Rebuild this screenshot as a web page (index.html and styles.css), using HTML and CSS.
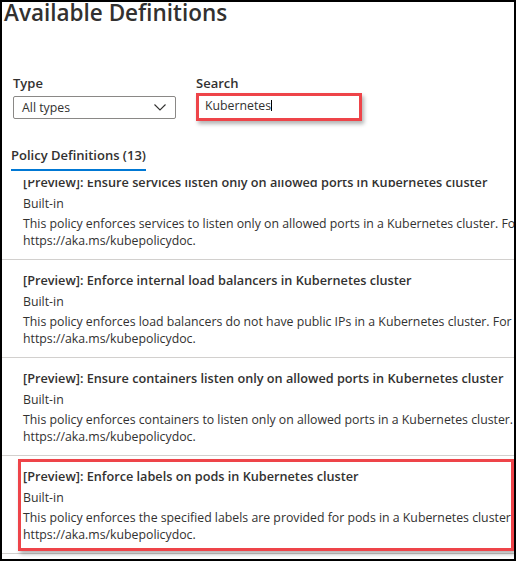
FILE: index.html
```html
<!DOCTYPE html>
<html lang="en">
<head>
<meta charset="utf-8">
<title>Available Definitions</title>
<link rel="stylesheet" href="styles.css">
</head>
<body>
<div class="frame">
  <h1 class="title">Available Definitions</h1>
  <div class="filters">
    <div class="field field-type">
      <div class="label">Type</div>
      <div class="select">
        <span class="select-text">All types</span>
        <svg class="chevron" width="12" height="7" viewBox="0 0 12 7"><polyline points="0.5,0.5 6,6 11.5,0.5" fill="none" stroke="#323130" stroke-width="1.1"/></svg>
      </div>
    </div>
    <div class="field field-search">
      <div class="label">Search</div>
      <div class="search"><span class="search-text">Kubernetes</span><span class="caret"></span></div>
    </div>
  </div>
  <div class="tabs"><div class="tab active">Policy Definitions (13)</div></div>
  <div class="list">
    <div class="list-inner">
      <div class="item">
        <div class="item-title">[Preview]: Ensure services listen only on allowed ports in Kubernetes cluster</div>
        <div class="item-type">Built-in</div>
        <div class="item-desc">This policy enforces services to listen only on allowed ports in a Kubernetes cluster. For more information, see</div>
        <div class="item-desc">https://aka.ms/kubepolicydoc.</div>
      </div>
      <div class="item">
        <div class="item-title">[Preview]: Enforce internal load balancers in Kubernetes cluster</div>
        <div class="item-type">Built-in</div>
        <div class="item-desc">This policy enforces load balancers do not have public IPs in a Kubernetes cluster. For more information, see</div>
        <div class="item-desc">https://aka.ms/kubepolicydoc.</div>
      </div>
      <div class="item">
        <div class="item-title">[Preview]: Ensure containers listen only on allowed ports in Kubernetes cluster</div>
        <div class="item-type">Built-in</div>
        <div class="item-desc">This policy enforces containers to listen only on allowed ports in a Kubernetes cluster. For more information, see</div>
        <div class="item-desc">https://aka.ms/kubepolicydoc.</div>
      </div>
      <div class="item item-highlight">
        <div class="item-title">[Preview]: Enforce labels on pods in Kubernetes cluster</div>
        <div class="item-type">Built-in</div>
        <div class="item-desc">This policy enforces the specified labels are provided for pods in a Kubernetes cluster. For more information, see</div>
        <div class="item-desc">https://aka.ms/kubepolicydoc.</div>
        <div class="highlight-box"></div>
      </div>
    </div>
  </div>
</div>
</body>
</html>
```
FILE: styles.css
```css
* { box-sizing: border-box; }
html, body { margin: 0; padding: 0; background: #fff; }
body {
  font-family: "Open Sans", "Noto Sans", sans-serif;
  font-size: 12.3px;
  color: #323130;
}
.frame {
  width: 516px;
  height: 561px;
  border: 2px solid #000;
  overflow: hidden;
  position: relative;
  background: #fff;
}
.title {
  margin: 0 0 0 2px;
  height: 23px;
  font-size: 22.5px;
  line-height: 22px;
  font-weight: 600;
  color: #323130;
  white-space: nowrap;
}
.filters {
  display: flex;
  align-items: flex-start;
  gap: 20px;
  margin-top: 49px;
  padding-left: 11px;
}
.label {
  font-size: 13px;
  line-height: 18px;
  font-weight: 600;
  color: #323130;
}
.field-type .select {
  margin-top: 4px;
  width: 163px;
  height: 23px;
  border: 1px solid #8a8886;
  border-radius: 2px;
  display: flex;
  align-items: center;
  justify-content: space-between;
  padding: 0 9px 0 8px;
}
.select-text { line-height: 21px; }
.chevron { display: block; }
.field-search .label { margin-bottom: 1px; }
.search {
  width: 166px;
  height: 28px;
  border: 3px solid #ee4449;
  box-shadow: 2px 3px 4px rgba(0,0,0,0.3);
  padding-left: 6px;
  display: flex;
  align-items: flex-start;
}
.search-text { line-height: 20px; }
.caret {
  width: 1px;
  height: 11px;
  background: #000;
  margin-top: 4px;
}
.tabs {
  display: flex;
  margin-top: 25px;
  padding-left: 9px;
}
.tab {
  font-size: 13px;
  font-weight: 600;
  line-height: 18px;
  padding-bottom: 5px;
  border-bottom: 2px solid #0078d4;
}
.list {
  margin-top: 9px;
  height: 400px;
  overflow: hidden;
}
.list-inner { margin-top: -18px; }
.item {
  position: relative;
  height: 98px;
  padding: 10px 0 10px 21px;
  border-bottom: 1px solid #d2d0ce;
  white-space: nowrap;
}
.item-title {
  font-size: 12.7px;
  font-weight: 600;
  line-height: 20px;
  margin-bottom: 2px;
}
.item-type {
  line-height: 20px;
  margin-bottom: 1px;
}
.item-desc { line-height: 17px; }
.highlight-box {
  position: absolute;
  left: 16px;
  right: 0;
  top: 3px;
  height: 92px;
  border: 3px solid #ee4449;
  box-shadow: 2px 3px 4px rgba(0,0,0,0.3);
}
```
